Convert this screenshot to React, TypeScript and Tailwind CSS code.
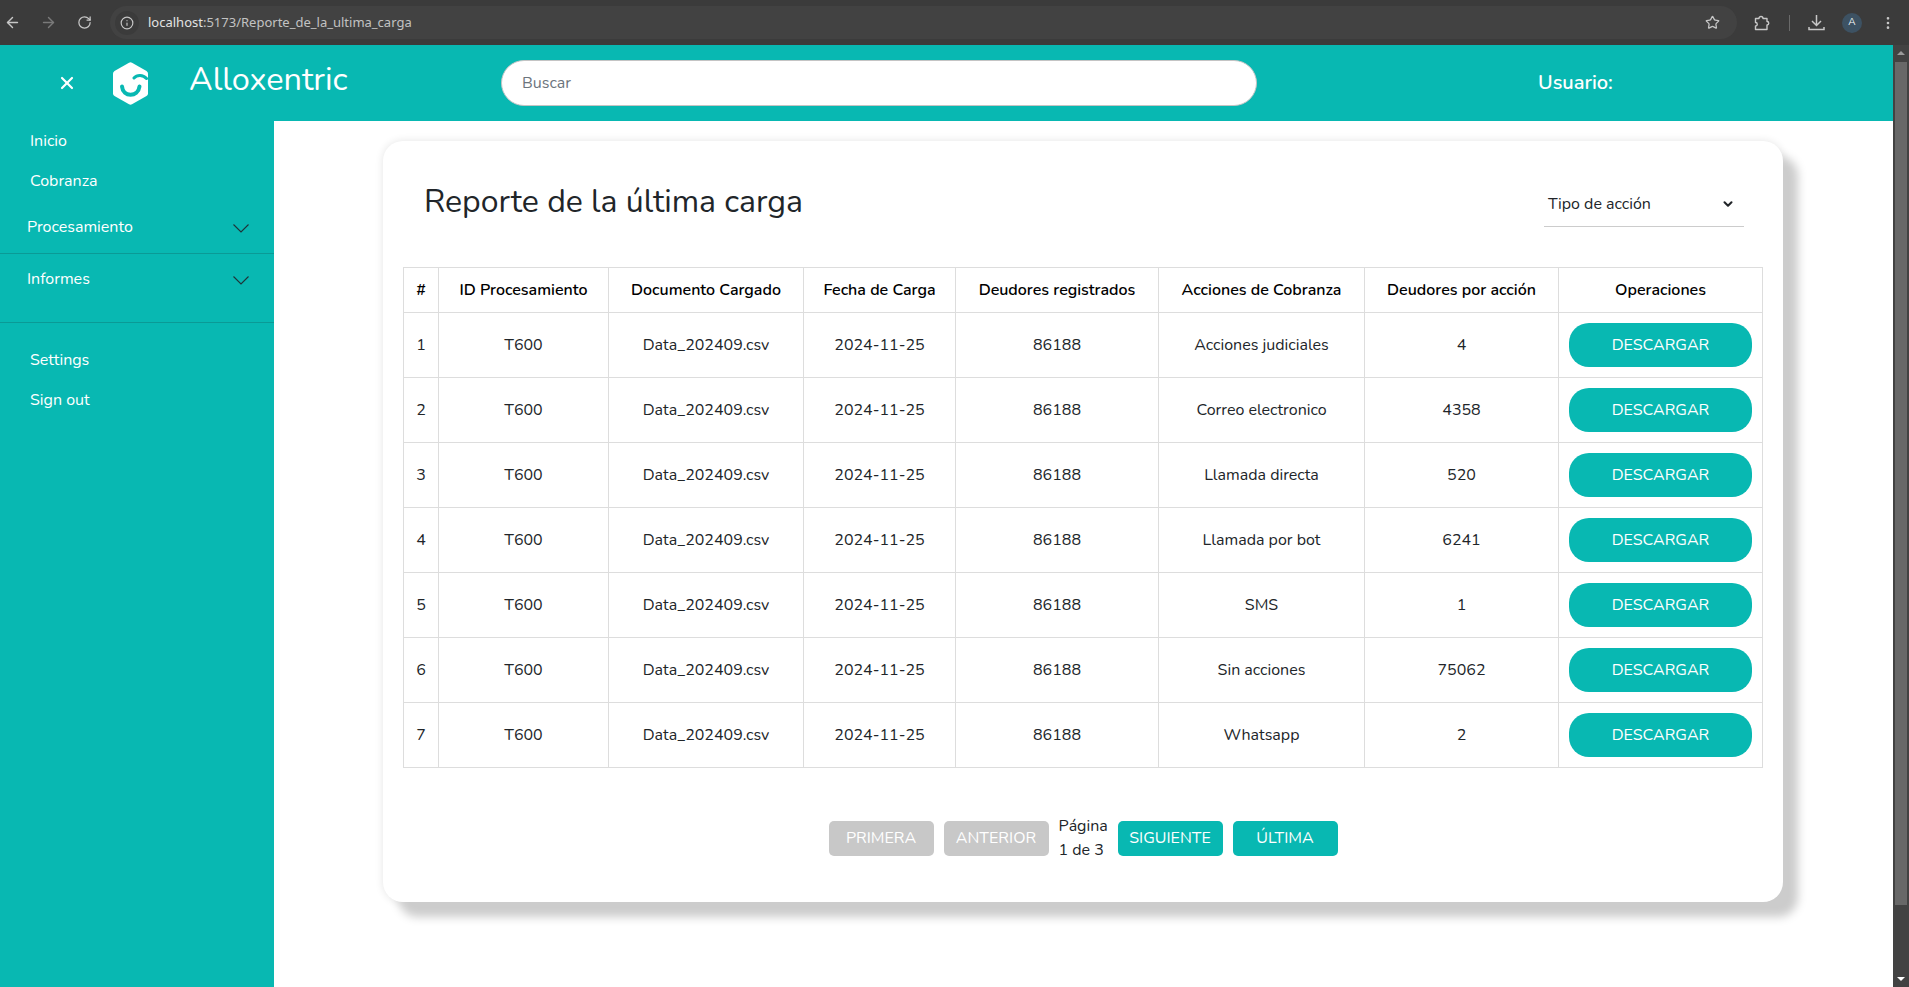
import React from "react";
import { ArrowLeft, ArrowRight, RotateCw, Info, Star, EllipsisVertical, X, ChevronDown } from "lucide-react";

const rows = [
  { action: "Acciones judiciales", count: "4" },
  { action: "Correo electronico", count: "4358" },
  { action: "Llamada directa", count: "520" },
  { action: "Llamada por bot", count: "6241" },
  { action: "SMS", count: "1" },
  { action: "Sin acciones", count: "75062" },
  { action: "Whatsapp", count: "2" },
];

const headers = [
  "#",
  "ID Procesamiento",
  "Documento Cargado",
  "Fecha de Carga",
  "Deudores registrados",
  "Acciones de Cobranza",
  "Deudores por acción",
  "Operaciones",
];

function BrowserBar() {
  return (
    <div className="flex h-[45px] items-center bg-[#3b3b3b] text-[#c7c7c7]">
      <ArrowLeft size={17} className="ml-[4px]" />
      <ArrowRight size={17} className="ml-[19px] text-[#7a7a7a]" />
      <RotateCw size={15} className="ml-[20px]" />
      <div className="ml-[18px] flex h-[33px] w-[1627px] items-center rounded-full bg-[#424242] pl-[5px]">
        <div className="flex h-[24px] w-[24px] items-center justify-center rounded-full bg-[#3b3b3b]">
          <Info size={14} />
        </div>
        <span className="ml-[9px] font-['Noto_Sans',sans-serif] text-[13px] text-[#e3e3e3]">
          localhost<span className="text-[#c2c2c2]">:5173/Reporte_de_la_ultima_carga</span>
        </span>
        <Star size={15} className="ml-auto mr-[17px]" />
      </div>
      <svg width="16" height="16" viewBox="0 0 16 16" fill="none" stroke="currentColor" strokeWidth="1.400" className="ml-[17px]">
        <path d="M1.500 3.500 H5 a2 2 0 0 1 4 0 H13 V6.500 a1.700 1.700 0 0 1 0 3.500 V14.500 H1.500 V11 a1.500 1.500 0 0 0 0 -3.500 Z" strokeLinejoin="round" />
      </svg>
      <div className="ml-[19px] h-[16px] w-px bg-[#6a6a6a]" />
      <svg width="17" height="17" viewBox="0 0 17 17" fill="none" stroke="currentColor" strokeWidth="1.500" className="ml-[18px]">
        <path d="M8.500 1 V11 M4 7 L8.500 11.500 L13 7 M1 13 V15.500 H16 V13" />
      </svg>
      <div className="ml-[17px] flex h-[20px] w-[20px] items-center justify-center rounded-full bg-[#3d5263] text-[10px] text-white">
        A
      </div>
      <EllipsisVertical size={16} className="ml-[18px]" />
    </div>
  );
}

function Logo() {
  return (
    <svg width="35" height="43" viewBox="0 0 35 43" className="ml-[36px] mt-[1px]">
      <path
        d="M16 0.700 Q17.500 0 19 0.700 L33.500 9 Q35 10 35 11.500 L35 31.500 Q35 33 33.500 34 L19 42.300 Q17.500 43 16 42.300 L1.500 34 Q0 33 0 31.500 L0 11.500 Q0 10 1.500 9 Z"
        fill="#fff"
      />
      <path d="M9 24.500 C10 35.500 25 35.500 26.500 24.500" fill="none" stroke="#08b8b2" strokeWidth="4" strokeLinecap="round" />
      <path d="M21 16 C24 12.500 30 12.500 33.500 16.500" fill="none" stroke="#08b8b2" strokeWidth="3" strokeLinecap="round" />
    </svg>
  );
}

function SideLink({ label }: { label: string }) {
  return <div className="pl-[30px] text-[16px] leading-[24px] text-white">{label}</div>;
}

function SideChevron() {
  return (
    <svg width="16" height="9" viewBox="0 0 16 9" fill="none" stroke="#1f3338" strokeWidth="1.100" className="mt-[9px] shrink-0">
      <path d="M0.500 0.500 L8 8 L15.500 0.500" />
    </svg>
  );
}

export default function App() {
  return (
    <div className="flex h-[987px] flex-col overflow-hidden bg-white font-['Nunito','Lato','Noto_Sans',sans-serif]">
      <BrowserBar />
      <div className="flex min-h-0 flex-1">
        <div className="flex min-w-0 flex-1 flex-col">
          <header className="flex h-[76px] shrink-0 items-center bg-[#08b8b2] text-white">
            <X size={20} strokeWidth={2.600} className="ml-[57px]" />
            <Logo />
            <div className="mb-[7px] ml-[41px] w-[312px] text-[32.500px] leading-none">Alloxentric</div>
            <div className="flex h-[46px] w-[756px] items-center rounded-full border border-[#c4c4c4] bg-white pl-[20px] text-[16px] text-[#6c757d]">
              Buscar
            </div>
            <div className="ml-[281px] text-[20px] font-semibold">Usuario:</div>
          </header>
          <div className="flex min-h-0 flex-1">
            <aside className="w-[274px] shrink-0 bg-[#08b8b2] pt-[8px]">
              <div className="flex flex-col gap-[16px]">
                <SideLink label="Inicio" />
                <SideLink label="Cobranza" />
              </div>
              <div className="mt-[14px]">
                <div className="flex h-[47px] justify-between border-b border-[#0a9a96] pl-[27px] pr-[25px] pt-[8px]">
                  <span className="text-[16px] leading-[24px] text-white">Procesamiento</span>
                  <SideChevron />
                </div>
                <div className="flex h-[69px] justify-between border-b border-[#0a9a96] pl-[27px] pr-[25px] pt-[13px]">
                  <span className="text-[16px] leading-[24px] text-white">Informes</span>
                  <SideChevron />
                </div>
              </div>
              <div className="mt-[25px] flex flex-col gap-[16px]">
                <SideLink label="Settings" />
                <SideLink label="Sign out" />
              </div>
            </aside>
            <main className="min-w-0 flex-1 pl-[109px] pt-[20px]">
              <div className="h-[761px] w-[1400px] rounded-[20px] bg-white px-[20px] shadow-[15px_15px_10px_#cccccc,0_0_8px_#e4e4e4]">
                <div className="flex h-[126px] items-start justify-between">
                  <h1 className="ml-[21px] mt-[37px] text-[32px] leading-[48px] text-[#212529]">Reporte de la última carga</h1>
                  <div className="mr-[19px] mt-[40px] flex h-[46px] w-[200px] items-center justify-between border-b border-[#cccccc] pl-[4px] pr-[9px] text-[16px] text-[#212529]">
                    Tipo de acción
                    <ChevronDown size={14} strokeWidth={3.500} />
                  </div>
                </div>
                <table className="w-[1359px] table-fixed border-collapse text-center text-[16px] text-[#212529]">
                  <colgroup>
                    <col className="w-[35px]" />
                    <col className="w-[170px]" />
                    <col className="w-[195px]" />
                    <col className="w-[152px]" />
                    <col className="w-[203px]" />
                    <col className="w-[206px]" />
                    <col className="w-[194px]" />
                    <col className="w-[204px]" />
                  </colgroup>
                  <thead>
                    <tr className="h-[45px]">
                      {headers.map((h) => (
                        <th key={h} className="border border-[#dddddd] font-semibold text-black">
                          {h}
                        </th>
                      ))}
                    </tr>
                  </thead>
                  <tbody>
                    {rows.map((r, i) => (
                      <tr key={r.action} className="h-[65px]">
                        <td className="border border-[#dddddd]">{i + 1}</td>
                        <td className="border border-[#dddddd]">T600</td>
                        <td className="border border-[#dddddd]">Data_202409.csv</td>
                        <td className="border border-[#dddddd]">2024-11-25</td>
                        <td className="border border-[#dddddd]">86188</td>
                        <td className="border border-[#dddddd]">{r.action}</td>
                        <td className="border border-[#dddddd]">{r.count}</td>
                        <td className="border border-[#dddddd]">
                          <button className="h-[44px] w-[183px] rounded-[20px] bg-[#08b8b2] text-[16px] text-white">DESCARGAR</button>
                        </td>
                      </tr>
                    ))}
                  </tbody>
                </table>
                <div className="mt-[46px] flex items-center justify-center gap-[10px] text-[16px]">
                  <button className="h-[35px] w-[105px] rounded-[5px] bg-[#c8c8c8] text-white">PRIMERA</button>
                  <button className="h-[35px] w-[105px] rounded-[5px] bg-[#c8c8c8] text-white">ANTERIOR</button>
                  <div className="w-[49px] whitespace-nowrap text-[16px] leading-[24px] text-[#212529]">
                    Página
                    <br />1 de 3
                  </div>
                  <button className="h-[35px] w-[105px] rounded-[5px] bg-[#08b8b2] text-white">SIGUIENTE</button>
                  <button className="h-[35px] w-[105px] rounded-[5px] bg-[#08b8b2] text-white">ÚLTIMA</button>
                </div>
              </div>
            </main>
          </div>
        </div>
        <div className="flex w-[16px] shrink-0 flex-col items-center bg-[#424242]">
          <div className="mt-[6px] h-0 w-0 border-x-[4px] border-b-[4px] border-x-transparent border-b-[#9a9a9a]" />
          <div className="mt-[7px] h-[843px] w-[12px] bg-[#686868]" />
          <div className="mb-[6px] mt-auto h-0 w-0 border-x-[4px] border-t-[4px] border-x-transparent border-t-white" />
        </div>
      </div>
    </div>
  );
}
